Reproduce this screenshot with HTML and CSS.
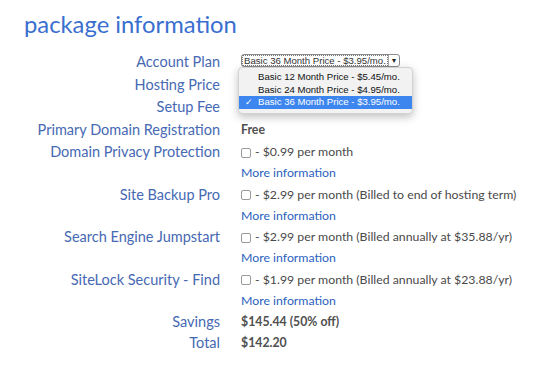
FILE: index.html
```html
<!DOCTYPE html>
<html lang="en">
<head>
    <meta charset="UTF-8">
    <title>package information</title>
    <link rel="stylesheet" href="styles.css">
</head>
<body>
    <div class="package">
        <h2 class="title">package information</h2>
        <div class="rows">
            <div class="label">Account Plan</div>
            <div class="value">
                <div class="plan">
                    <div class="select">
                        <span class="select-text">Basic 36 Month Price - $3.95/mo.</span>
                        <span class="select-arrow">&#9662;</span>
                    </div>
                    <ul class="menu">
                        <li>Basic 12 Month Price - $5.45/mo.</li>
                        <li>Basic 24 Month Price - $4.95/mo.</li>
                        <li class="selected">Basic 36 Month Price - $3.95/mo.</li>
                    </ul>
                </div>
            </div>

            <div class="label">Hosting Price</div>
            <div class="value"></div>

            <div class="label">Setup Fee</div>
            <div class="value"></div>

            <div class="label">Primary Domain Registration</div>
            <div class="value strong">Free</div>

            <div class="label">Domain Privacy Protection</div>
            <div class="value addon">
                <label><span class="box"></span> - $0.99 per month</label>
                <a href="#">More information</a>
            </div>

            <div class="label">Site Backup Pro</div>
            <div class="value addon">
                <label><span class="box"></span> - $2.99 per month (Billed to end of hosting term)</label>
                <a href="#">More information</a>
            </div>

            <div class="label">Search Engine Jumpstart</div>
            <div class="value addon">
                <label><span class="box"></span> - $2.99 per month (Billed annually at $35.88/yr)</label>
                <a href="#">More information</a>
            </div>

            <div class="label">SiteLock Security - Find</div>
            <div class="value addon">
                <label><span class="box"></span> - $1.99 per month (Billed annually at $23.88/yr)</label>
                <a href="#">More information</a>
            </div>

            <div class="label total">Savings</div>
            <div class="value strong total">$145.44 (50% off)</div>

            <div class="label total">Total</div>
            <div class="value strong total">$142.20</div>
        </div>
    </div>
</body>
</html>
```

FILE: styles.css
```css
*{
    box-sizing: border-box;
}
body{
    margin: 0;
    background: #fff;
    font-family: "Lato", "Open Sans", sans-serif;
}
.package{
    padding: 9px 0 0 0;
}
.title{
    margin: 0 0 12px 24px;
    font-size: 23.8px;
    font-weight: normal;
    line-height: 30px;
    color: #3a6fd0;
}
.rows{
    display: grid;
    grid-template-columns: 220px 1fr;
    column-gap: 21px;
}
.label{
    text-align: right;
    font-size: 14.5px;
    line-height: 22.5px;
    color: #4669b3;
}
.value{
    font-size: 12.3px;
    line-height: 22.5px;
    color: #4a4a4a;
}
.total{
    line-height: 21px;
}
.strong{
    font-weight: bold;
    color: #505050;
}
.addon label{
    display: flex;
    align-items: center;
    height: 22px;
    padding-top: 1px;
}
.addon a{
    display: block;
    color: #2b5fc0;
    text-decoration: none;
    line-height: 20px;
    padding-bottom: 0.5px;
}
.box{
    display: inline-block;
    width: 10px;
    height: 10px;
    border: 1px solid #9a9a9a;
    border-radius: 2px;
    margin: 0 4px 0 0;
    background: #fff;
}

/* plan select with open menu */
.plan{
    position: relative;
    height: 22px;
    padding-top: 3px;
}
.select{
    display: flex;
    width: 159px;
    height: 13px;
    border: 1px solid #8a8a8a;
    border-radius: 3px;
    background: #fff;
    font-family: "Liberation Sans", Arial, sans-serif;
    font-size: 9.6px;
    line-height: 11px;
    color: #333;
}
.select-text{
    flex: 1;
    padding-left: 2px;
    outline: 1px dotted #777;
    outline-offset: -1px;
    white-space: nowrap;
    overflow: hidden;
}
.select-arrow{
    width: 11px;
    border-left: 1px solid #aaa;
    text-align: center;
    font-size: 8px;
    color: #222;
}
.menu{
    position: absolute;
    left: -3px;
    top: 16px;
    width: 175px;
    margin: 0;
    padding: 3px 0 4px;
    list-style: none;
    background: #f2f2f2;
    border: 1px solid #d2d2d2;
    border-radius: 4px;
    box-shadow: 0 3px 8px rgba(0, 0, 0, 0.25);
    font-family: "Liberation Sans", Arial, sans-serif;
    font-size: 9.6px;
    line-height: 12.5px;
    color: #111;
    z-index: 2;
}
.menu li{
    padding-left: 19px;
    position: relative;
    white-space: nowrap;
}
.menu .selected{
    background: #3d86f0;
    color: #fff;
}
.menu .selected::before{
    content: "\2713";
    position: absolute;
    left: 6px;
    font-size: 9px;
}
```
